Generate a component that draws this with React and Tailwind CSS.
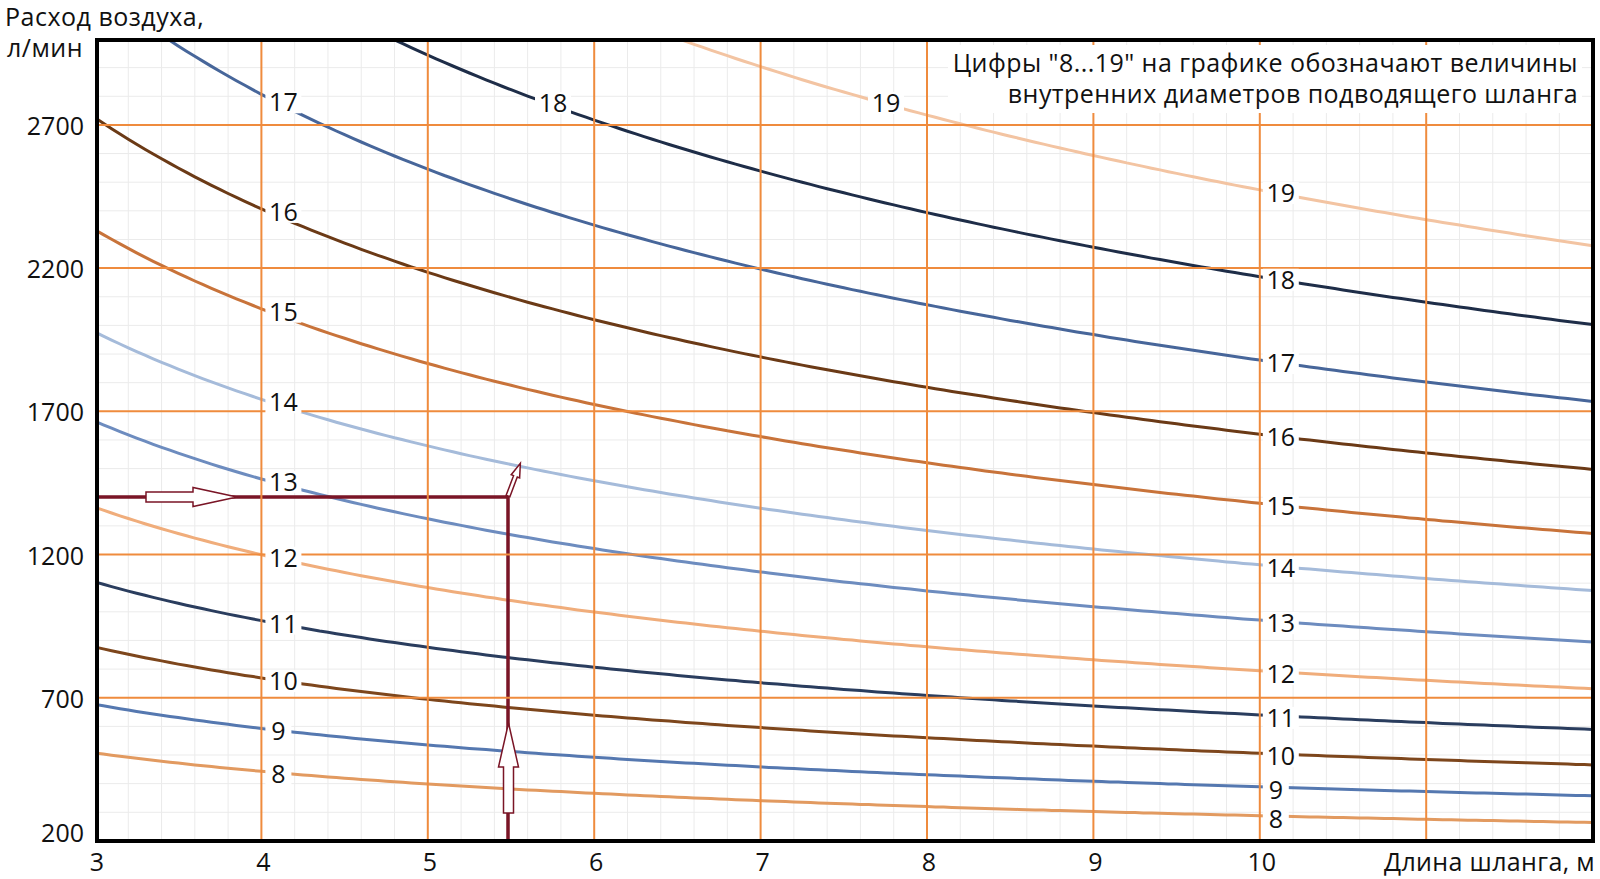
import React from 'react'

// plot mapping: hose length 3..12 m, air flow 200..3000 l/min
const X0 = 95
const SX = 166.4
const Y0 = 39
const SY = 0.2864
const xOf = (L) => X0 + (L - 3) * SX
const yOf = (q) => Y0 + (3000 - q) * SY

const ORANGE = '#ef8b3d'
const MAROON = '#7a1526'

const curves = [
  { d: 8, q10: 288, b: 0.47, color: '#e29a60' },
  { d: 9, q10: 389, b: 0.46, color: '#5578b0' },
  { d: 10, q10: 506, b: 0.457, color: '#7d461c' },
  { d: 11, q10: 640, b: 0.453, color: '#2a3d5e' },
  { d: 12, q10: 794, b: 0.45, color: '#f0ad7b' },
  { d: 13, q10: 971, b: 0.448, color: '#6d8cbf' },
  { d: 14, q10: 1164, b: 0.44, color: '#a5bbda' },
  { d: 15, q10: 1379, b: 0.437, color: '#c8733a' },
  { d: 16, q10: 1620, b: 0.432, color: '#6b3a16' },
  { d: 17, q10: 1879, b: 0.438, color: '#47669a' },
  { d: 18, q10: 2170, b: 0.44, color: '#1e2d48' },
  { d: 19, q10: 2473, b: 0.45, color: '#f3c4a2' },
]

const qOf = (c, L) => c.q10 * Math.pow(10 / L, c.b)

const curvePath = (c) => {
  const pts = []
  for (let i = 0; i <= 180; i++) {
    const L = 3 + i * 0.05
    pts.push(`${xOf(L).toFixed(1)},${yOf(qOf(c, L)).toFixed(1)}`)
  }
  return 'M' + pts.join('L')
}

// curve number labels, placed right of the point where the curve meets a grid line
const labels = [
  ...curves.filter((c) => c.d <= 17).map((c) => ({
    text: String(c.d),
    x: xOf(4) + 4,
    y: yOf(qOf(c, 4)) + (c.d === 17 ? 8 : 3),
  })),
  ...curves.map((c) => ({
    text: String(c.d),
    x: xOf(10) + 3,
    y: yOf(qOf(c, 10)) + 3,
  })),
  { text: '18', x: 535, y: 103 },
  { text: '19', x: 868, y: 103 },
]

const yTicks = [2700, 2200, 1700, 1200, 700]
const xTicks = [3, 4, 5, 6, 7, 8, 9, 10]

const CurveLabel = ({ text, x, y }) => {
  const w = text.length > 1 ? 36 : 26
  return (
    <g>
      <rect x={x} y={y - 11} width={w} height={22} fill="#fff" />
      <text x={x + w / 2} y={y + 9} fontSize="25" textAnchor="middle" fill="#111">
        {text}
      </text>
    </g>
  )
}

const Chart = () => {
  const minorX = []
  for (let i = 1; i < 45; i++) if (i % 5 !== 0) minorX.push(X0 + i * (SX / 5))
  const minorY = []
  for (let q = 300; q < 3000; q += 100) if ((q - 200) % 500 !== 0) minorY.push(yOf(q))

  return (
    <svg width="1600" height="879" viewBox="0 0 1600 879" className="block">
      <defs>
        <clipPath id="plot">
          <rect x="97" y="40" width="1496" height="801" />
        </clipPath>
      </defs>

      {/* minor grid */}
      <g stroke="#ebebeb" strokeWidth="1">
        {minorX.map((x) => (
          <line key={'mx' + x} x1={x} y1="40" x2={x} y2="841" />
        ))}
        {minorY.map((y) => (
          <line key={'my' + y} x1="97" y1={y} x2="1593" y2={y} />
        ))}
      </g>

      {/* diameter curves */}
      <g clipPath="url(#plot)" fill="none" strokeWidth="3" strokeLinecap="round">
        {curves.map((c) => (
          <path key={c.d} d={curvePath(c)} stroke={c.color} />
        ))}
      </g>

      {/* example path: 1400 l/min, 5.5 m */}
      <polyline points="97,497 508,497 508,841" fill="none" stroke={MAROON} strokeWidth="3.5" />

      {/* major grid */}
      <g stroke={ORANGE} strokeWidth="2">
        {[4, 5, 6, 7, 8, 9, 10, 11].map((L) => (
          <line key={'vx' + L} x1={xOf(L)} y1="40" x2={xOf(L)} y2="841" />
        ))}
        {yTicks.map((q) => (
          <line key={'hy' + q} x1="97" y1={yOf(q)} x2="1593" y2={yOf(q)} />
        ))}
      </g>

      {labels.map((l, i) => (
        <CurveLabel key={i} {...l} />
      ))}

      {/* note */}
      <rect x="948" y="45" width="634" height="68" fill="#fff" />
      <g fontSize="25" fill="#111" letterSpacing="0.45" textAnchor="end">
        <text x="1578" y="72">
          Цифры "8...19" на графике обозначают величины
        </text>
        <text x="1578" y="103">
          внутренних диаметров подводящего шланга
        </text>
      </g>

      {/* arrows */}
      <g fill="#fff" stroke={MAROON} strokeWidth="1.5" strokeLinejoin="miter">
        <polygon points="146,492 193,492 193,487.5 237,497 193,506.5 193,502 146,502" />
        <polygon points="508.5,723 518.5,767 513.5,767 513.5,813 503.5,813 503.5,767 498.5,767" />
        <polygon
          points="-2,0 -2,-21 -4.5,-21 0,-35 4.5,-21 2,-21 2,0"
          transform="translate(508 496) rotate(20.7)"
        />
      </g>

      {/* frame */}
      <rect x="97" y="40" width="1496" height="801" fill="none" stroke="#000" strokeWidth="4" />

      {/* axis ticks */}
      <g fontSize="25" fill="#111">
        {yTicks.map((q) => (
          <text key={q} x="84" y={yOf(q) + 10} textAnchor="end">
            {q}
          </text>
        ))}
        <text x="84" y="842" textAnchor="end">
          200
        </text>
        {xTicks.map((L) => (
          <text key={L} x={xOf(L) + 2} y="871" textAnchor="middle">
            {L}
          </text>
        ))}
        <text x="1595" y="871" textAnchor="end" letterSpacing="0.35">
          Длина шланга, м
        </text>
      </g>

      {/* y axis title */}
      <g fontSize="25" fill="#111" letterSpacing="0.5">
        <text x="5" y="26">
          Расход воздуха,
        </text>
        <text x="7" y="57">
          л/мин
        </text>
      </g>
    </svg>
  )
}

export default function App() {
  return (
    <div className="w-[1600px] h-[879px] overflow-hidden bg-white font-['Open_Sans',sans-serif]">
      <Chart />
    </div>
  )
}
